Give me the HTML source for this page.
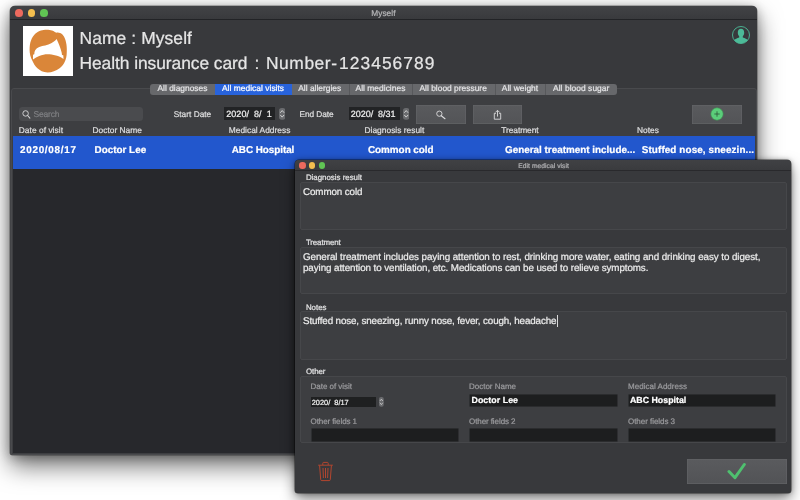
<!DOCTYPE html>
<html>
<head>
<meta charset="utf-8">
<title>Myself</title>
<style>
*{box-sizing:border-box;margin:0;padding:0}
html,body{width:800px;height:500px;overflow:hidden;background:#fff}
body{font-family:"Liberation Sans",sans-serif;position:relative}
#wrap{position:absolute;left:0;top:0;width:800px;height:500px;will-change:transform;text-rendering:geometricPrecision}
.r{position:absolute;display:block}
.t{position:absolute;white-space:nowrap;-webkit-text-stroke:.22px currentColor}
</style>
</head>
<body>
<div id="wrap">
<div class="r" style="left:10.25px;top:5.60px;width:747.00px;height:449.70px;background:#434447;border-radius:5px 5px 2.5px 2.5px;box-shadow:0 11px 24px rgba(0,0,0,.55),0 2px 12px rgba(0,0,0,.3),0 0 0 .5px rgba(0,0,0,.45);"></div>
<div class="r" style="left:10.25px;top:5.60px;width:747.00px;height:14.30px;background:linear-gradient(#424346,#393a3d);border-radius:5px 5px 0 0;border-bottom:1px solid #222326;"></div>
<div class="r" style="left:10.25px;top:19.90px;width:747.00px;height:68.20px;background:#38393c;"></div>
<div class="r" style="left:10.25px;top:85.00px;width:747.00px;height:55.00px;background:#38393c;"></div>
<div class="r" style="left:11.00px;top:88.10px;width:745.50px;height:366.50px;background:#3d3e41;border:1px solid #494a4d;border-radius:3px 3px 1px 1px;"></div>
<div class="r" style="left:15.15px;top:9.05px;width:7.70px;height:7.70px;background:#ed6a5e;border-radius:50%;"></div>
<div class="r" style="left:27.65px;top:9.05px;width:7.70px;height:7.70px;background:#f5bf4f;border-radius:50%;"></div>
<div class="r" style="left:40.15px;top:9.05px;width:7.70px;height:7.70px;background:#61c554;border-radius:50%;"></div>
<div class="t" style="left:371.25px;top:8.00px;font-size:8.3px;line-height:10.00px;letter-spacing:0.054px;color:#b6b6b8;">Myself</div>
<svg class="r" style="left:22.75px;top:25.85px" width="50" height="50" viewBox="0 0 50 50"><rect width="50" height="50" fill="#fff"/>
<path d="M6.6 24C6.6 20 7 17 8 14.5C10 9 14 5.5 18 4.5C21 3.6 26 3.4 29 4.6C31 5.4 32.3 6.2 33.2 6.8C35 6 37.5 6.8 39.2 8.3C42 11 43.8 17 43.8 23C43.8 27 43.8 31 42.5 34C41 38 39 40.5 36.6 42.3C33 45 29 46.5 24.6 46.5C20 46.5 17 44.5 14.4 42.3C12 40 10.5 37.5 9.5 35C7.5 31 6.6 28 6.6 24Z" fill="#da8639"/>
<path d="M10 33.6L10 28.8L11.3 28.2C11.2 25 12.6 22.2 16.2 20.9C18.5 20.1 20 19.8 22.2 19.4C24.5 19 26.5 18.2 28.2 17.2C30.5 15.900 32.300 14.800 33.600 13.100C34.600 15.300 35.600 17.500 36.400 19.500C37.400 22 38.200 24.500 38.700 26.700L39 28.900L40.300 29.200L40.500 33.100C38 31.200 35.500 30.300 33 29.600C30 28.700 27 28.200 24.600 28.200C22 28.200 19 28.800 16.200 29.900C14 30.700 12 32 10 33.600Z" fill="#fff"/></svg>
<div class="t" style="left:79.50px;top:28.00px;font-size:17.4px;line-height:20.00px;letter-spacing:0.109px;color:#e6e6e6;">Name : Myself</div>
<div class="t" style="left:79.50px;top:53.00px;font-size:17.4px;line-height:20.00px;letter-spacing:-0.063px;color:#e6e6e6;">Health insurance card</div>
<div class="t" style="left:254.50px;top:53.00px;font-size:17.4px;line-height:20.00px;letter-spacing:0.000px;color:#e6e6e6;">:</div>
<div class="t" style="left:266.00px;top:53.00px;font-size:17.4px;line-height:20.00px;letter-spacing:0.553px;color:#e6e6e6;">Number-</div>
<div class="t" style="left:339.00px;top:53.00px;font-size:17.4px;line-height:20.00px;letter-spacing:1.051px;color:#e6e6e6;">123456789</div>
<svg class="r" style="left:731.25px;top:25.25px" width="20" height="20" viewBox="0 0 20 20"><defs><clipPath id="uc"><circle cx="10" cy="10" r="8.500"/></clipPath></defs>
<circle cx="10" cy="10" r="8.500" fill="none" stroke="#4cbb98" stroke-width=".9"/>
<path clip-path="url(#uc)" d="M10 3.800C12.100 3.800 13.200 5.400 13.200 7.500C13.200 9.100 12.600 10.500 11.800 11.300L11.800 12.600C13.800 13.300 16.300 14.200 17 15.500L17 20L3 20L3 15.500C3.700 14.200 6.200 13.300 8.200 12.600L8.200 11.300C7.400 10.500 6.800 9.100 6.800 7.500C6.800 5.400 7.900 3.800 10 3.800Z" fill="#4cbb98"/></svg>
<div class="r" style="left:150.00px;top:83.50px;width:467.00px;height:11.00px;background:#67686b;border-radius:3px;"></div>
<div class="r" style="left:215.00px;top:83.50px;width:76.75px;height:11.00px;background:#2863dc;"></div>
<div class="t" style="left:157.50px;top:83.00px;font-size:8.4px;line-height:10.00px;letter-spacing:0.003px;color:#e4e4e6;">All diagnoses</div>
<div class="t" style="left:222.00px;top:83.00px;font-size:8.4px;line-height:10.00px;letter-spacing:0.037px;color:#fff;">All medical visits</div>
<div class="t" style="left:298.25px;top:83.00px;font-size:8.4px;line-height:10.00px;letter-spacing:0.004px;color:#e4e4e6;">All allergies</div>
<div class="r" style="left:349.00px;top:83.50px;width:1.00px;height:11.00px;background:#57585b;"></div>
<div class="t" style="left:355.50px;top:83.00px;font-size:8.4px;line-height:10.00px;letter-spacing:0.043px;color:#e4e4e6;">All medicines</div>
<div class="r" style="left:412.00px;top:83.50px;width:1.00px;height:11.00px;background:#57585b;"></div>
<div class="t" style="left:419.50px;top:83.00px;font-size:8.4px;line-height:10.00px;letter-spacing:0.015px;color:#e4e4e6;">All blood pressure</div>
<div class="r" style="left:494.50px;top:83.50px;width:1.00px;height:11.00px;background:#57585b;"></div>
<div class="t" style="left:501.75px;top:83.00px;font-size:8.4px;line-height:10.00px;letter-spacing:0.061px;color:#e4e4e6;">All weight</div>
<div class="r" style="left:545.25px;top:83.50px;width:1.00px;height:11.00px;background:#57585b;"></div>
<div class="t" style="left:553.00px;top:83.00px;font-size:8.4px;line-height:10.00px;letter-spacing:0.067px;color:#e4e4e6;">All blood sugar</div>
<div class="r" style="left:18.50px;top:107.40px;width:124.00px;height:13.40px;background:#4a4b4e;border-radius:3.5px;"></div>
<svg class="r" style="left:21px;top:108.800px" width="11" height="11" viewBox="0 0 11 11"><circle cx="4.600" cy="4.450" r="2.750" fill="none" stroke="#d2d2d4" stroke-width=".95"/><path d="M6.600 6.500L8.900 9.100" stroke="#d2d2d4" stroke-width="1.050" stroke-linecap="round"/></svg>
<div class="t" style="left:33.50px;top:109.00px;font-size:8.5px;line-height:10.00px;letter-spacing:-0.206px;color:#7e7f82;">Search</div>
<div class="t" style="left:173.75px;top:109.00px;font-size:8.3px;line-height:10.00px;letter-spacing:0.015px;color:#dededf;">Start Date</div>
<div class="t" style="left:299.50px;top:109.00px;font-size:8.3px;line-height:10.00px;letter-spacing:-0.051px;color:#dededf;">End Date</div>
<div class="r" style="left:224.25px;top:107.20px;width:50.75px;height:13.00px;background:#222325;"></div>
<div class="t" style="left:226.25px;top:109.00px;font-size:9px;line-height:10.00px;letter-spacing:0.042px;color:#f0f0f0;white-space:pre;">2020/  8/  1</div>
<svg class="r" style="left:278.5px;top:108px" width="6.399999999999977" height="11.700000000000003" viewBox="0 0 6.399999999999977 11.700000000000003"><rect width="6.399999999999977" height="11.700000000000003" rx="2.69" fill="#6a6b6e"/><path d="M1.54 4.45L3.20 2.57L4.86 4.45M1.54 7.25L3.20 9.13L4.86 7.25" fill="none" stroke="#e8e8e8" stroke-width="0.83" stroke-linecap="round" stroke-linejoin="round"/></svg>
<div class="r" style="left:349.25px;top:107.20px;width:50.75px;height:13.00px;background:#222325;"></div>
<div class="t" style="left:350.75px;top:109.00px;font-size:9px;line-height:10.00px;letter-spacing:-0.029px;color:#f0f0f0;white-space:pre;">2020/  8/31</div>
<svg class="r" style="left:403px;top:108px" width="6.399999999999977" height="11.700000000000003" viewBox="0 0 6.399999999999977 11.700000000000003"><rect width="6.399999999999977" height="11.700000000000003" rx="2.69" fill="#6a6b6e"/><path d="M1.54 4.45L3.20 2.57L4.86 4.45M1.54 7.25L3.20 9.13L4.86 7.25" fill="none" stroke="#e8e8e8" stroke-width="0.83" stroke-linecap="round" stroke-linejoin="round"/></svg>
<div class="r" style="left:416.25px;top:105.00px;width:50.00px;height:18.80px;background:linear-gradient(#595a5d,#535457);box-shadow:inset 0 0 0 .7px #626366;"></div>
<svg class="r" style="left:434px;top:108px" width="13" height="13" viewBox="0 0 13 13"><circle cx="5.350" cy="5.700" r="2.650" fill="none" stroke="#dcdcde" stroke-width=".9"/><path d="M7.300 7.700L11 10.700" stroke="#dcdcde" stroke-width="1.100" stroke-linecap="round"/></svg>
<div class="r" style="left:472.50px;top:105.00px;width:49.50px;height:18.80px;background:linear-gradient(#595a5d,#535457);box-shadow:inset 0 0 0 .7px #626366;"></div>
<svg class="r" style="left:491.650px;top:108.500px" width="11" height="12" viewBox="0 0 11 12"><path d="M4 4.300H2.300V10.200H8.700V4.300H7M5.500 7.600V1.500M3.500 3.300L5.500 1.300 7.500 3.300" fill="none" stroke="#dcdcde" stroke-width=".9"/></svg>
<div class="r" style="left:692.30px;top:105.10px;width:50.00px;height:18.70px;background:linear-gradient(#595a5d,#535457);box-shadow:inset 0 0 0 .7px #626366;"></div>
<svg class="r" style="left:710.400px;top:107.400px" width="14" height="14" viewBox="0 0 14 14"><circle cx="7" cy="7" r="6.150" fill="#5bcd7a" stroke="#3f9956" stroke-width=".6"/><path d="M7 4.300V9.700M4.300 7H9.700" stroke="#2b4d36" stroke-width=".75"/></svg>
<div class="t" style="left:18.75px;top:125.00px;font-size:8.4px;line-height:10.00px;letter-spacing:0.039px;color:#dededf;">Date of visit</div>
<div class="t" style="left:92.50px;top:125.00px;font-size:8.4px;line-height:10.00px;letter-spacing:0.002px;color:#dededf;">Doctor Name</div>
<div class="t" style="left:228.75px;top:125.00px;font-size:8.4px;line-height:10.00px;letter-spacing:0.009px;color:#dededf;">Medical Address</div>
<div class="t" style="left:364.50px;top:125.00px;font-size:8.4px;line-height:10.00px;letter-spacing:0.016px;color:#dededf;">Diagnosis result</div>
<div class="t" style="left:501.25px;top:125.00px;font-size:8.4px;line-height:10.00px;letter-spacing:-0.059px;color:#dededf;">Treatment</div>
<div class="t" style="left:637.00px;top:125.00px;font-size:8.4px;line-height:10.00px;letter-spacing:0.014px;color:#dededf;">Notes</div>
<div class="r" style="left:12.50px;top:136.00px;width:742.50px;height:316.80px;background:#27282c;"></div>
<div class="r" style="left:12.50px;top:136.00px;width:742.50px;height:32.50px;background:#2257cd;"></div>
<div class="t" style="left:20.00px;top:145.00px;font-size:9.9px;line-height:11.00px;letter-spacing:0.717px;color:#fff;font-weight:bold;">2020/08/17</div>
<div class="t" style="left:94.50px;top:145.00px;font-size:9.9px;line-height:11.00px;letter-spacing:0.005px;color:#fff;font-weight:bold;">Doctor Lee</div>
<div class="t" style="left:231.75px;top:145.00px;font-size:9.9px;line-height:11.00px;letter-spacing:-0.046px;color:#fff;font-weight:bold;">ABC Hospital</div>
<div class="t" style="left:368.00px;top:145.00px;font-size:9.9px;line-height:11.00px;letter-spacing:-0.025px;color:#fff;font-weight:bold;">Common cold</div>
<div class="t" style="left:505.00px;top:145.00px;font-size:9.9px;line-height:11.00px;letter-spacing:0.004px;color:#fff;font-weight:bold;">General treatment include...</div>
<div class="t" style="left:641.75px;top:145.00px;font-size:9.9px;line-height:11.00px;letter-spacing:0.108px;color:#fff;font-weight:bold;">Stuffed nose, sneezin...</div>
<div class="r" style="left:295.25px;top:160.25px;width:496.05px;height:332.45px;background:#38393c;border-radius:4px 4px 3px 3px;box-shadow:0 6px 14px rgba(0,0,0,.5),0 0 5px rgba(0,0,0,.35),0 0 0 .5px rgba(0,0,0,.6);"></div>
<div class="r" style="left:295.25px;top:160.25px;width:496.05px;height:10.65px;background:linear-gradient(#404144,#3a3b3e);border-radius:4px 4px 0 0;border-bottom:1px solid #29292c;"></div>
<div class="r" style="left:299.30px;top:162.20px;width:6.40px;height:6.40px;background:#ed6a5e;border-radius:50%;"></div>
<div class="r" style="left:309.05px;top:162.20px;width:6.40px;height:6.40px;background:#f5bf4f;border-radius:50%;"></div>
<div class="r" style="left:319.05px;top:162.20px;width:6.40px;height:6.40px;background:#61c554;border-radius:50%;"></div>
<div class="t" style="left:518.25px;top:163.00px;font-size:6.7px;line-height:7.00px;letter-spacing:0.050px;color:#b0b0b2;">Edit medical visit</div>
<div class="t" style="left:305.90px;top:173.00px;font-size:7.9px;line-height:9.00px;letter-spacing:-0.007px;color:#e2e2e3;">Diagnosis result</div>
<div class="r" style="left:300.00px;top:182.00px;width:487.00px;height:48.00px;background:#3d3e41;border:1px solid #46474a;border-radius:2px;"></div>
<div class="t" style="left:303.00px;top:187.00px;font-size:9.8px;line-height:11.00px;letter-spacing:-0.096px;color:#ececec;">Common cold</div>
<div class="t" style="left:305.90px;top:238.00px;font-size:7.9px;line-height:9.00px;letter-spacing:-0.107px;color:#e2e2e3;">Treatment</div>
<div class="r" style="left:300.00px;top:247.00px;width:487.00px;height:46.75px;background:#3d3e41;border:1px solid #46474a;border-radius:2px;"></div>
<div class="t" style="left:303.00px;top:252.00px;font-size:9.8px;line-height:11.00px;letter-spacing:-0.066px;color:#ececec;">General treatment includes paying attention to rest, drinking more water, eating and drinking easy to digest,</div>
<div class="t" style="left:303.00px;top:263.00px;font-size:9.8px;line-height:11.00px;letter-spacing:-0.079px;color:#ececec;">paying attention to ventilation, etc. Medications can be used to relieve symptoms.</div>
<div class="t" style="left:305.90px;top:303.00px;font-size:7.9px;line-height:9.00px;letter-spacing:-0.009px;color:#e2e2e3;">Notes</div>
<div class="r" style="left:300.00px;top:311.25px;width:487.00px;height:48.25px;background:#3d3e41;border:1px solid #46474a;border-radius:2px;"></div>
<div class="t" style="left:303.00px;top:316.00px;font-size:9.8px;line-height:11.00px;letter-spacing:-0.128px;color:#ececec;">Stuffed nose, sneezing, runny nose, fever, cough, headache</div>
<div class="r" style="left:557.00px;top:314.50px;width:1.00px;height:12.00px;background:#d8d8d8;"></div>
<div class="t" style="left:305.90px;top:367.00px;font-size:7.9px;line-height:9.00px;letter-spacing:-0.039px;color:#e2e2e3;">Other</div>
<div class="r" style="left:300.00px;top:376.25px;width:487.00px;height:66.75px;background:#3d3e41;border:1px solid #46474a;border-radius:2px;"></div>
<div class="t" style="left:310.50px;top:382.00px;font-size:8.0px;line-height:9.00px;letter-spacing:-0.024px;color:#9b9b9e;">Date of visit</div>
<div class="t" style="left:469.00px;top:382.00px;font-size:8.0px;line-height:9.00px;letter-spacing:-0.013px;color:#9b9b9e;">Doctor Name</div>
<div class="t" style="left:628.00px;top:382.00px;font-size:8.0px;line-height:9.00px;letter-spacing:0.022px;color:#9b9b9e;">Medical Address</div>
<div class="r" style="left:310.50px;top:396.75px;width:65.75px;height:10.25px;background:#1f2021;"></div>
<div class="t" style="left:311.75px;top:398.00px;font-size:7.4px;line-height:9.00px;letter-spacing:-0.003px;color:#f0f0f0;white-space:pre;">2020/  8/17</div>
<svg class="r" style="left:379.25px;top:397px" width="4.75" height="9.75" viewBox="0 0 4.75 9.75"><rect width="4.75" height="9.75" rx="1.99" fill="#6a6b6e"/><path d="M1.14 3.71L2.38 2.15L3.61 3.71M1.14 6.04L2.38 7.61L3.61 6.04" fill="none" stroke="#e8e8e8" stroke-width="0.62" stroke-linecap="round" stroke-linejoin="round"/></svg>
<div class="r" style="left:469.00px;top:393.50px;width:148.50px;height:13.50px;background:#1d1e1f;box-shadow:inset 0 0 0 .6px #3a3b3e;"></div>
<div class="t" style="left:471.50px;top:395.00px;font-size:8.8px;line-height:10.00px;letter-spacing:0.060px;color:#fff;font-weight:bold;">Doctor Lee</div>
<div class="r" style="left:628.00px;top:393.50px;width:148.00px;height:13.50px;background:#1d1e1f;box-shadow:inset 0 0 0 .6px #3a3b3e;"></div>
<div class="t" style="left:630.00px;top:395.00px;font-size:8.8px;line-height:10.00px;letter-spacing:0.002px;color:#fff;font-weight:bold;">ABC Hospital</div>
<div class="t" style="left:310.50px;top:417.00px;font-size:8.0px;line-height:9.00px;letter-spacing:-0.083px;color:#9b9b9e;">Other fields 1</div>
<div class="t" style="left:469.00px;top:417.00px;font-size:8.0px;line-height:9.00px;letter-spacing:-0.083px;color:#9b9b9e;">Other fields 2</div>
<div class="t" style="left:628.00px;top:417.00px;font-size:8.0px;line-height:9.00px;letter-spacing:-0.044px;color:#9b9b9e;">Other fields 3</div>
<div class="r" style="left:310.50px;top:427.75px;width:148.25px;height:14.25px;background:#1d1e1f;box-shadow:inset 0 0 0 .6px #3a3b3e;"></div>
<div class="r" style="left:469.00px;top:427.75px;width:148.50px;height:14.25px;background:#1d1e1f;box-shadow:inset 0 0 0 .6px #3a3b3e;"></div>
<div class="r" style="left:628.00px;top:427.75px;width:148.00px;height:14.25px;background:#1d1e1f;box-shadow:inset 0 0 0 .6px #3a3b3e;"></div>
<svg class="r" style="left:317px;top:461px" width="17" height="21" viewBox="0 0 17 21"><path d="M1.200 4.200H15.800M5.800 4V2.200Q5.800 1.400 6.600 1.400H10.400Q11.200 1.400 11.200 2.200V4M2.600 4.400L3.700 18.600Q3.800 19.600 4.800 19.600H12.200Q13.200 19.600 13.300 18.600L14.400 4.400M6 7L6.400 17M8.500 7V17M11 7L10.600 17" fill="none" stroke="#b3462f" stroke-width="1"/></svg>
<div class="r" style="left:687.00px;top:458.75px;width:100.00px;height:25.00px;background:linear-gradient(#5a5b5e,#525356);box-shadow:inset 0 0 0 .7px #626366;"></div>
<svg class="r" style="left:725px;top:460px" width="24" height="22" viewBox="0 0 24 22"><path d="M4 11.500L10 17.700L19.300 4.500" fill="none" stroke="#4fc06f" stroke-width="3" stroke-linejoin="round" stroke-linecap="round"/></svg>
</div>
</body>
</html>
